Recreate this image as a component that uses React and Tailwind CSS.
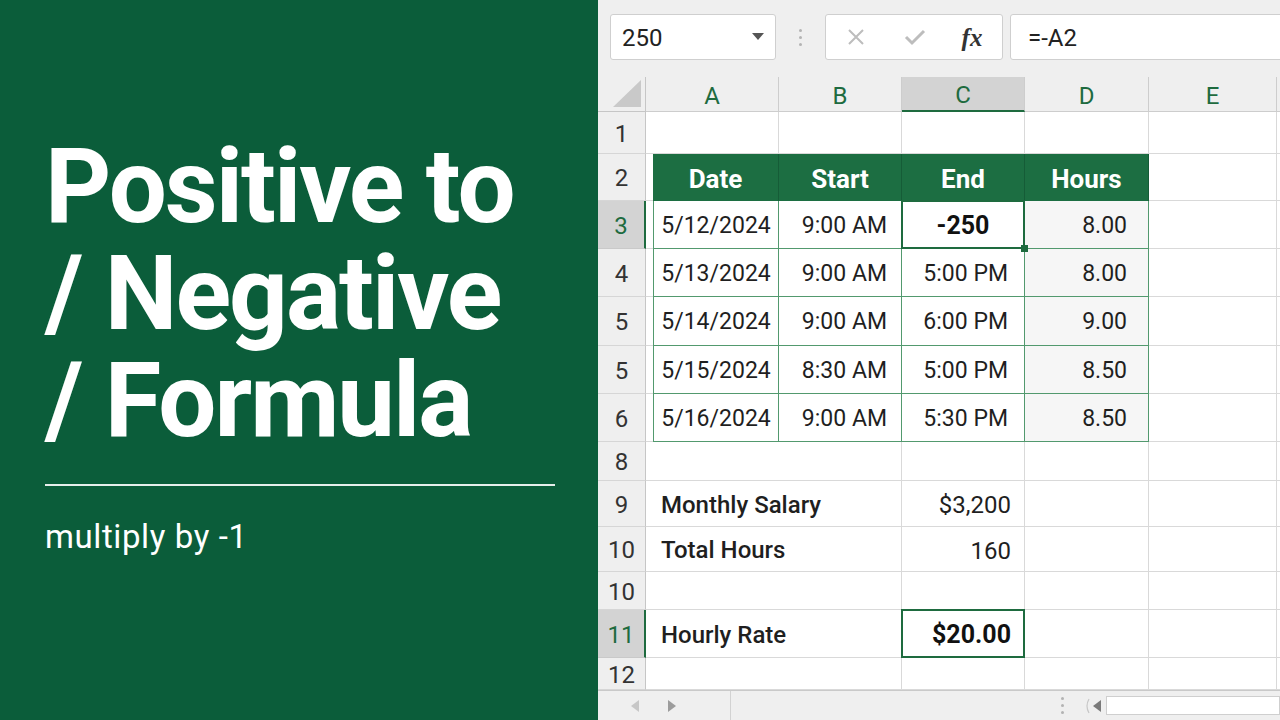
import React from "react";

const GB = "border-[#d9d9d9]";
const TB = "border-[#52996e]";

function RowHead({ n, active }) {
  if (active) {
    return (
      <div className="w-[48px] shrink-0 h-full flex items-center justify-center pt-[2px] bg-[#d3d3d3] text-[#1e6b3f] border-r-2 border-r-[#1e6b3f] border-b border-b-[#c9c9c9] text-[24px]">
        {n}
      </div>
    );
  }
  return (
    <div className="w-[48px] shrink-0 h-full flex items-center justify-center pt-[2px] bg-[#efefef] text-[#333333] border-r border-r-[#c6c6c6] border-b border-b-[#d6d6d6] text-[24px]">
      {n}
    </div>
  );
}

function Rest() {
  return <div className={"flex-1 h-full border-b " + GB} />;
}

function ECell() {
  return <div className={"w-[128px] shrink-0 h-full border-r border-b " + GB} />;
}

function PlainRow({ h, n }) {
  return (
    <div className={"flex shrink-0 " + h}>
      <RowHead n={n} />
      <div className={"w-[133px] shrink-0 h-full border-r border-b " + GB} />
      <div className={"w-[123px] shrink-0 h-full border-r border-b " + GB} />
      <div className={"w-[123px] shrink-0 h-full border-r border-b " + GB} />
      <div className={"w-[124px] shrink-0 h-full border-r border-b " + GB} />
      <ECell />
      <Rest />
    </div>
  );
}

function Selection({ handle }) {
  return (
    <>
      <div className="absolute -left-[1px] -top-[1px] -right-[1px] -bottom-[1px] border-2 border-[#1e6b3f] pointer-events-none" />
      {handle && (
        <div className="absolute -right-[4px] -bottom-[4px] w-[7px] h-[7px] bg-[#1e6b3f]" />
      )}
    </>
  );
}

function TableRow({ h, n, active, date, start, end, hours, selected }) {
  return (
    <div className={"flex shrink-0 text-[23px] text-[#1f1f1f] " + h}>
      <RowHead n={n} active={active} />
      <div className={"w-[7px] shrink-0 h-full border-b " + GB} />
      <div className={"w-[126px] shrink-0 h-full border-l border-r border-b flex items-center justify-center pt-[3px] " + TB}>
        {date}
      </div>
      <div className={"w-[123px] shrink-0 h-full border-r border-b flex items-center justify-end pr-[14px] pt-[3px] " + TB}>
        {start}
      </div>
      {selected ? (
        <div className={"relative w-[123px] shrink-0 h-full border-r border-b flex items-center justify-center pt-[2px] font-bold text-[25px] text-[#111111] " + TB}>
          {end}
          <Selection handle />
        </div>
      ) : (
        <div className={"w-[123px] shrink-0 h-full border-r border-b flex items-center justify-end pr-[16px] pt-[3px] " + TB}>
          {end}
        </div>
      )}
      <div className={"w-[124px] shrink-0 h-full border-r border-b flex items-center justify-end pr-[21px] pt-[3px] bg-[#f6f6f6] " + TB}>
        {hours}
      </div>
      <ECell />
      <Rest />
    </div>
  );
}

function SumRow({ h, n, active, label, value, bold, selected }) {
  return (
    <div className={"flex shrink-0 text-[#1f1f1f] " + h}>
      <RowHead n={n} active={active} />
      <div className={"w-[256px] shrink-0 h-full border-r border-b flex items-center pl-[15px] pt-[2px] font-medium text-[24px] whitespace-nowrap " + GB}>
        {label}
      </div>
      <div
        className={
          "relative w-[123px] shrink-0 h-full border-r border-b flex items-center justify-end pr-[13px] pt-[3px] " +
          (bold ? "font-bold text-[25px] text-[#111111] " : "text-[24px] ") +
          GB
        }
      >
        {value}
        {selected && <Selection />}
      </div>
      <div className={"w-[124px] shrink-0 h-full border-r border-b " + GB} />
      <ECell />
      <Rest />
    </div>
  );
}

function Toolbar() {
  return (
    <div className="h-[77px] shrink-0 bg-[#efefef] flex items-start pt-[14px] pl-[12px] overflow-hidden">
      <div className="w-[166px] h-[46px] shrink-0 bg-white border border-[#cfcfcf] rounded-[3px] flex items-center pl-[11px] pr-[11px]">
        <span className="text-[24px] text-[#222222] pt-[2px]">250</span>
        <svg className="ml-auto" width="12" height="8" viewBox="0 0 12 8">
          <polygon points="0,0 12,0 6,7" fill="#555555" />
        </svg>
      </div>
      <div className="w-[49px] h-[46px] shrink-0 flex items-center justify-center">
        <div className="flex flex-col gap-[4px]">
          <div className="w-[3px] h-[3px] rounded-full bg-[#b3b3b3]" />
          <div className="w-[3px] h-[3px] rounded-full bg-[#b3b3b3]" />
          <div className="w-[3px] h-[3px] rounded-full bg-[#b3b3b3]" />
        </div>
      </div>
      <div className="w-[178px] h-[46px] shrink-0 bg-white border border-[#cfcfcf] rounded-[3px] flex items-center">
        <div className="w-[60px] flex justify-center">
          <svg width="20" height="20" viewBox="0 0 20 20">
            <path d="M3 3 L17 17 M17 3 L3 17" stroke="#bdbdbd" strokeWidth="2" fill="none" />
          </svg>
        </div>
        <div className="w-[57px] flex justify-center">
          <svg width="24" height="20" viewBox="0 0 24 20">
            <path d="M3 10 L9 16 L21 4" stroke="#bdbdbd" strokeWidth="3" fill="none" />
          </svg>
        </div>
        <div className="w-[58px] flex justify-center">
          <span className="italic font-semibold font-['Liberation_Serif','DejaVu_Serif',serif] text-[25px] text-[#333333] leading-none">
            fx
          </span>
        </div>
      </div>
      <div className="ml-[7px] w-[300px] h-[46px] shrink-0 bg-white border border-[#cfcfcf] rounded-[3px] flex items-center pl-[17px]">
        <span className="text-[24px] text-[#222222] pt-[2px]">=-A2</span>
      </div>
    </div>
  );
}

function HeaderRow() {
  const base = "shrink-0 h-full flex items-center justify-center pt-[3px] border-r border-b border-[#cdcdcd] text-[#1e6b3f] text-[24px]";
  return (
    <div className="flex shrink-0 h-[35px] bg-[#efefef]">
      <div className="w-[48px] shrink-0 h-full border-r border-b border-[#c6c6c6] flex items-end justify-end pr-[4px] pb-[4px]">
        <svg width="28" height="27" viewBox="0 0 28 27">
          <polygon points="28,0 28,27 0,27" fill="#c9c9c9" />
        </svg>
      </div>
      <div className={"w-[133px] " + base}>A</div>
      <div className={"w-[123px] " + base}>B</div>
      <div className="w-[123px] shrink-0 h-full flex items-center justify-center pt-[3px] border-r border-[#cdcdcd] border-b-2 border-b-[#1e6b3f] bg-[#d3d3d3] text-[#1e6b3f] text-[24px]">
        C
      </div>
      <div className={"w-[124px] " + base}>D</div>
      <div className={"w-[128px] " + base}>E</div>
      <div className="flex-1 h-full border-b border-[#cdcdcd]" />
    </div>
  );
}

function TableHeader() {
  const hc = "shrink-0 h-full flex items-center justify-center pt-[3px] bg-[#1c6e42] text-white font-bold text-[26px] border-r border-r-[#155c37]";
  return (
    <div className="flex shrink-0 h-[47px]">
      <RowHead n={2} />
      <div className={"w-[7px] shrink-0 h-full border-b " + GB} />
      <div className={"w-[126px] " + hc}>Date</div>
      <div className={"w-[123px] " + hc}>Start</div>
      <div className={"w-[123px] " + hc}>End</div>
      <div className={"w-[124px] " + hc}>Hours</div>
      <ECell />
      <Rest />
    </div>
  );
}

function BottomBar() {
  return (
    <div className="h-[30px] shrink-0 flex items-center bg-[#efefef] border-t border-[#c9c9c9]">
      <div className="w-[133px] h-full shrink-0 border-r border-[#d2d2d2] flex items-center">
        <svg className="ml-[33px]" width="8" height="12" viewBox="0 0 8 12">
          <polygon points="8,0 8,12 0,6" fill="#c7c7c7" />
        </svg>
        <svg className="ml-[29px]" width="8" height="12" viewBox="0 0 8 12">
          <polygon points="0,0 0,12 8,6" fill="#9c9c9c" />
        </svg>
      </div>
      <div className="flex-1" />
      <div className="flex flex-col gap-[4px] mr-[20px]">
        <div className="w-[3px] h-[3px] rounded-full bg-[#b3b3b3]" />
        <div className="w-[3px] h-[3px] rounded-full bg-[#b3b3b3]" />
        <div className="w-[3px] h-[3px] rounded-full bg-[#b3b3b3]" />
      </div>
      <svg width="6" height="16" viewBox="0 0 6 16">
        <path d="M5 1 Q1 8 5 15" stroke="#c7c7c7" strokeWidth="1.2" fill="none" />
      </svg>
      <svg className="ml-[3px]" width="8" height="12" viewBox="0 0 8 12">
        <polygon points="8,0 8,12 0,6" fill="#7a7a7a" />
      </svg>
      <div className="ml-[5px] w-[174px] h-[19px] shrink-0 bg-white border border-[#cfcfcf]" />
    </div>
  );
}

function Sheet() {
  return (
    <div className="flex-1 min-w-0 h-full flex flex-col bg-white overflow-hidden">
      <Toolbar />
      <HeaderRow />
      <PlainRow h="h-[42px]" n={1} />
      <TableHeader />
      <TableRow h="h-[48px]" n={3} active date="5/12/2024" start="9:00 AM" end="-250" hours="8.00" selected />
      <TableRow h="h-[48px]" n={4} date="5/13/2024" start="9:00 AM" end="5:00 PM" hours="8.00" />
      <TableRow h="h-[49px]" n={5} date="5/14/2024" start="9:00 AM" end="6:00 PM" hours="9.00" />
      <TableRow h="h-[48px]" n={5} date="5/15/2024" start="8:30 AM" end="5:00 PM" hours="8.50" />
      <TableRow h="h-[48px]" n={6} date="5/16/2024" start="9:00 AM" end="5:30 PM" hours="8.50" />
      <SumRow h="h-[39px]" n={8} label="" value="" />
      <SumRow h="h-[46px]" n={9} label="Monthly Salary" value="$3,200" />
      <SumRow h="h-[45px]" n={10} label="Total Hours" value="160" />
      <SumRow h="h-[38px]" n={10} label="" value="" />
      <SumRow h="h-[48px]" n={11} active label="Hourly Rate" value="$20.00" bold selected />
      <SumRow h="h-[32px]" n={12} label="" value="" />
      <BottomBar />
    </div>
  );
}

function Left() {
  return (
    <div className="w-[598px] shrink-0 h-full bg-[#0b5d3a] pl-[45px] pt-[133px] text-white">
      <div className="text-[103px] leading-[107px] font-bold tracking-[-2px] whitespace-nowrap">
        <div>Positive to</div>
        <div>/ Negative</div>
        <div>/ Formula</div>
      </div>
      <div className="mt-[30px] w-[510px] h-[2px] bg-white/90" />
      <div className="mt-[31px] text-[33px] leading-[40px] tracking-[0.6px] whitespace-nowrap">multiply by -1</div>
    </div>
  );
}

export default function App() {
  return (
    <div className="w-[1280px] h-[720px] flex overflow-hidden font-['Roboto',sans-serif]">
      <Left />
      <Sheet />
    </div>
  );
}
